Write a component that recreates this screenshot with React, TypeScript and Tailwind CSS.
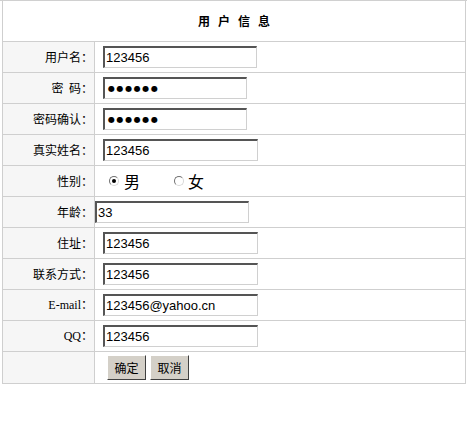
import type { ReactNode } from 'react'

const cjk = { fontFamily: '"Noto Sans CJK SC", "Liberation Sans", sans-serif' }

function Field({ value, w = 'w-[154px]', ml = 'ml-[8px]', dots = false }: { value: string; w?: string; ml?: string; dots?: boolean }) {
  return (
    <div
      className={`${w} ${ml} h-[22px] flex items-center bg-white border-t-2 border-l-2 border-t-[#555] border-l-[#555] border-b border-r border-b-[#d0d0d0] border-r-[#d0d0d0] text-black overflow-hidden whitespace-nowrap ${dots ? 'pl-[3px] tracking-[1.6px]' : 'pl-[1px]'}`}
      style={dots ? { fontFamily: '"DejaVu Sans", sans-serif', fontSize: 8 } : { fontFamily: '"Liberation Sans", Arial, sans-serif', fontSize: 13 }}
    >
      {value}
    </div>
  )
}

function Row({ label, children, serif = false }: { label: ReactNode; children?: ReactNode; serif?: boolean }) {
  return (
    <div className="flex h-[31px] border-b border-[#cfcfcf] last:border-b-0">
      <div
        className="w-[92px] shrink-0 bg-[#f6f6f6] border-r border-[#cfcfcf] flex items-center justify-end pr-[1px] text-[12px] text-black"
        style={serif ? { fontFamily: '"Liberation Serif", "Noto Sans CJK SC", serif' } : cjk}
      >
        {label}
      </div>
      <div className="flex-1 flex items-center bg-white">{children}</div>
    </div>
  )
}

function Radio({ checked }: { checked?: boolean }) {
  return (
    <span className="w-[10px] h-[10px] rounded-full border border-t-[#707070] border-l-[#707070] border-b-[#d8d8d8] border-r-[#d8d8d8] bg-white flex items-center justify-center">
      {checked && <span className="w-[4px] h-[4px] rounded-full bg-black" />}
    </span>
  )
}

function Btn({ children }: { children: ReactNode }) {
  return (
    <button
      type="button"
      className="h-[25px] w-[39px] bg-[#d4d0c8] border border-t-white border-l-white border-b-[#404040] border-r-[#404040] text-[12px] text-black flex items-center justify-center"
      style={cjk}
    >
      {children}
    </button>
  )
}

export default function App() {
  return (
    <div className="w-[467px] h-[437px] bg-white border-t border-[#d0d0d0]">
      <div className="ml-[2px] w-[464px] border-l border-r border-b border-[#cfcfcf]">
        <div className="h-[41px] border-b border-[#cfcfcf] flex items-center justify-center gap-[8px] text-[12px] font-bold text-black" style={cjk}>
          <span>用</span>
          <span>户</span>
          <span>信</span>
          <span>息</span>
        </div>
        <Row label="用户名：">
          <Field value="123456" />
        </Row>
        <Row label={<>密&nbsp;&nbsp;码：</>}>
          <Field value="●●●●●●" w="w-[144px]" dots />
        </Row>
        <Row label="密码确认：">
          <Field value="●●●●●●" w="w-[144px]" dots />
        </Row>
        <Row label="真实姓名：">
          <Field value="123456" w="w-[155px]" />
        </Row>
        <Row label="性别：">
          <div className="flex items-center ml-[14px] text-[16px] text-black" style={cjk}>
            <Radio checked />
            <span className="ml-[5px]">男</span>
            <span className="ml-[34px]"><Radio /></span>
            <span className="ml-[4px]">女</span>
          </div>
        </Row>
        <Row label="年龄：">
          <Field value="33" w="w-[154px]" ml="ml-0" />
        </Row>
        <Row label="住址：">
          <Field value="123456" w="w-[155px]" />
        </Row>
        <Row label="联系方式：">
          <Field value="123456" w="w-[155px]" />
        </Row>
        <Row label="E-mail：" serif>
          <Field value="123456@yahoo.cn" w="w-[155px]" />
        </Row>
        <Row label="QQ：" serif>
          <Field value="123456" w="w-[155px]" />
        </Row>
        <Row label="">
          <div className="flex items-center gap-[4px] ml-[12px]">
            <Btn>确定</Btn>
            <Btn>取消</Btn>
          </div>
        </Row>
      </div>
    </div>
  )
}
